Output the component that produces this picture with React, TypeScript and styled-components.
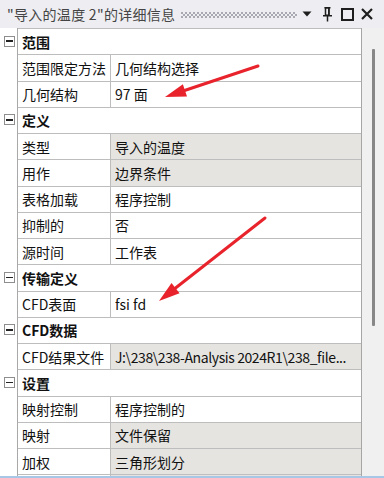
import React from "react";
import styled, { createGlobalStyle } from "styled-components";

const Global = createGlobalStyle`
  html, body { margin: 0; padding: 0; background: #f0f0f0; }
  body { font-family: "Noto Sans CJK SC", "Noto Sans", sans-serif; }
`;

const Window = styled.div`
  position: relative;
  width: 384px;
  height: 478px;
  display: flex;
  flex-direction: column;
  background: #eeeef2;
  overflow: hidden;
`;

const TitleBar = styled.div`
  height: 28px;
  flex: none;
  display: flex;
  align-items: center;
  padding: 0 7px 0 7px;
  box-sizing: border-box;
`;

const Title = styled.span`
  font-size: 14px;
  letter-spacing: 0.3px;
  color: #444;
  white-space: nowrap;
`;

const Grip = styled.div`
  flex: 1;
  height: 6px;
  margin: 1px 0 0 6px;
  background-image: radial-gradient(circle at 1px 1px, #a9a9b3 1.1px, transparent 1.2px),
    radial-gradient(circle at 1px 1px, #a9a9b3 1.1px, transparent 1.2px);
  background-size: 4px 4px;
  background-position: 0 0, 2px 2px;
`;

const IconSlot = styled.span`
  width: 20px;
  height: 28px;
  display: flex;
  align-items: center;
  justify-content: center;
  color: #1e1e1e;
`;

const Content = styled.div`
  flex: 1;
  display: flex;
  min-height: 0;
`;

const Grid = styled.div`
  width: 362px;
  flex: none;
  background: #fff;
  border-right: 1px solid #a6a6a6;
  box-sizing: border-box;
  overflow: hidden;
`;

const Row = styled.div`
  display: grid;
  grid-template-columns: 18px 93px 1fr;
  height: 26.25px;
`;

const Gutter = styled.div`
  border-right: 1px solid #a9a9a9;
  display: flex;
  align-items: center;
  justify-content: center;
  padding-left: 1px;
`;

const Toggle = styled.span`
  width: 11px;
  height: 11px;
  box-sizing: border-box;
  border: 1px solid #8e8e8e;
  background: #fff;
  display: flex;
  align-items: center;
  justify-content: center;
`;

const Minus = styled.span`
  width: 7px;
  height: 1.5px;
  background: #222;
`;

const Cell = styled.div<{ $gray?: boolean; $name?: boolean; $header?: boolean }>`
  grid-column: ${(p) => (p.$header ? "2 / span 2" : "auto")};
  border-top: 1px solid #bdbdbd;
  border-right: ${(p) => (p.$name ? "1px solid #bdbdbd" : "none")};
  background: ${(p) => (p.$gray ? "#e6e4e0" : "#fff")};
  display: flex;
  align-items: center;
  padding-left: 4px;
  font-size: 14px;
  font-weight: ${(p) => (p.$header ? 700 : 400)};
  color: #111;
  white-space: nowrap;
  overflow: hidden;
  min-width: 0;
`;

const CellText = styled.span<{ $tight?: boolean }>`
  overflow: hidden;
  text-overflow: ellipsis;
  white-space: nowrap;
  padding-right: 3px;
  letter-spacing: ${(p) => (p.$tight ? "-0.4px" : "normal")};
`;

const Track = styled.div`
  flex: 1;
  background: #f0f0f0;
  padding: 21px 0 0 10px;
`;

const Thumb = styled.div`
  width: 3px;
  height: 277px;
  background: #878787;
  border-radius: 1px;
`;

const BottomLine = styled.div`
  height: 2px;
  flex: none;
  background: #a8c7e6;
`;

const Overlay = styled.svg`
  position: absolute;
  left: 0;
  top: 0;
  pointer-events: none;
`;

type Prop = [string, string, boolean?];
type Section = { title: string; rows: Prop[] };

const sections: Section[] = [
  { title: "范围", rows: [["范围限定方法", "几何结构选择"], ["几何结构", "97 面"]] },
  {
    title: "定义",
    rows: [
      ["类型", "导入的温度", true],
      ["用作", "边界条件", true],
      ["表格加载", "程序控制"],
      ["抑制的", "否"],
      ["源时间", "工作表"],
    ],
  },
  { title: "传输定义", rows: [["CFD表面", "fsi fd"]] },
  { title: "CFD数据", rows: [["CFD结果文件", "J:\\238\\238-Analysis 2024R1\\238_file...", true]] },
  {
    title: "设置",
    rows: [
      ["映射控制", "程序控制的"],
      ["映射", "文件保留", true],
      ["加权", "三角形划分", true],
      ["", "", true],
    ],
  },
];

function Arrow({ x1, y1, x2, y2 }: { x1: number; y1: number; x2: number; y2: number }) {
  const dx = x2 - x1;
  const dy = y2 - y1;
  const len = Math.hypot(dx, dy);
  const ux = dx / len;
  const uy = dy / len;
  const L = 21;
  const w = 6.5;
  const bx = x2 - ux * L;
  const by = y2 - uy * L;
  const nx = -uy;
  const ny = ux;
  const pts = `${x2},${y2} ${bx + nx * w},${by + ny * w} ${bx - nx * w},${by - ny * w}`;
  return (
    <g>
      <line x1={x1} y1={y1} x2={bx + ux * 2} y2={by + uy * 2} stroke="#e8232b" strokeWidth={3} strokeLinecap="round" />
      <polygon points={pts} fill="#e8232b" />
    </g>
  );
}

export default function App() {
  return (
    <>
      <Global />
      <Window>
        <TitleBar>
          <Title>"导入的温度 2"的详细信息</Title>
          <Grip />
          <IconSlot>
            <svg width="10" height="6" viewBox="0 0 10 6">
              <polygon points="0.5,0.5 9.5,0.5 5,5.5" fill="currentColor" />
            </svg>
          </IconSlot>
          <IconSlot>
            <svg width="11" height="15" viewBox="0 0 11 15">
              <path d="M2.5 0.75 H8.5" stroke="currentColor" strokeWidth="1.5" fill="none" />
              <rect x="3.5" y="0.75" width="3.5" height="7.5" stroke="currentColor" strokeWidth="1.5" fill="none" />
              <rect x="6" y="1" width="1.5" height="7" fill="currentColor" />
              <path d="M1 8.75 H10" stroke="currentColor" strokeWidth="1.5" fill="none" />
              <path d="M5.5 9 V14.5" stroke="currentColor" strokeWidth="1.5" fill="none" />
            </svg>
          </IconSlot>
          <IconSlot>
            <svg width="13" height="13" viewBox="0 0 13 13">
              <rect x="1" y="1" width="11" height="11" stroke="currentColor" strokeWidth="2" fill="none" />
            </svg>
          </IconSlot>
          <IconSlot>
            <svg width="12" height="12" viewBox="0 0 12 12">
              <path d="M1 1 L11 11 M11 1 L1 11" stroke="currentColor" strokeWidth="2.2" fill="none" />
            </svg>
          </IconSlot>
        </TitleBar>
        <Content>
          <Grid>
            {sections.map((s) => (
              <React.Fragment key={s.title}>
                <Row>
                  <Gutter>
                    <Toggle>
                      <Minus />
                    </Toggle>
                  </Gutter>
                  <Cell $header>
                    <CellText>{s.title}</CellText>
                  </Cell>
                </Row>
                {s.rows.map(([name, value, gray], i) => (
                  <Row key={s.title + i}>
                    <Gutter />
                    <Cell $name>
                      <CellText>{name}</CellText>
                    </Cell>
                    <Cell $gray={gray}>
                      <CellText $tight={value.length > 20}>{value}</CellText>
                    </Cell>
                  </Row>
                ))}
              </React.Fragment>
            ))}
          </Grid>
          <Track>
            <Thumb />
          </Track>
        </Content>
        <BottomLine />
        <Overlay width={384} height={478} viewBox="0 0 384 478">
          <Arrow x1={258} y1={66} x2={165} y2={97} />
          <Arrow x1={265} y1={218} x2={159} y2={301} />
        </Overlay>
      </Window>
    </>
  );
}
